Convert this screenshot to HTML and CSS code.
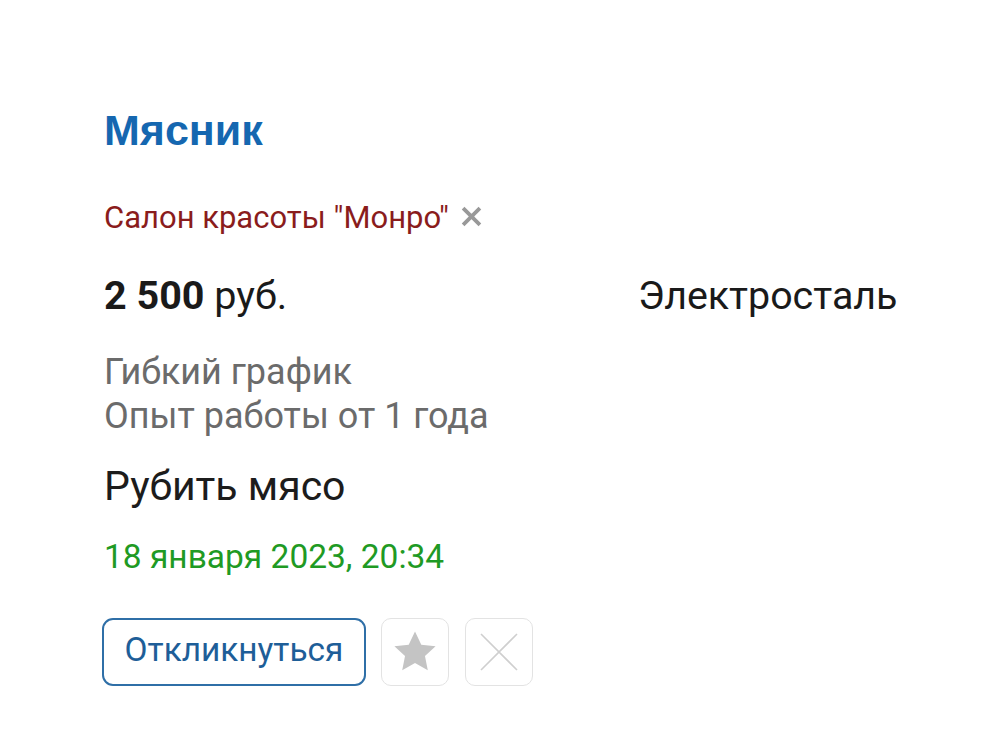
FILE: index.html
```html
<!DOCTYPE html>
<html lang="ru">
<head>
<meta charset="utf-8">
<link rel="stylesheet" href="styles.css">
</head>
<body>
<div class="card">
  <h1 class="title">Мясник</h1>
  <div class="company">
    <span class="company-name">Салон красоты "Монро"</span>
    <svg class="company-x" width="21" height="21" viewBox="0 0 20 20"><path d="M2 2 L18 18 M18 2 L2 18" stroke="#999999" stroke-width="3.6" stroke-linecap="butt"/></svg>
  </div>
  <div class="price-row">
    <div class="price"><b>2 500</b> руб.</div>
    <div class="city">Электросталь</div>
  </div>
  <div class="conditions">
    <div>Гибкий график</div>
    <div>Опыт работы от 1 года</div>
  </div>
  <div class="desc">Рубить мясо</div>
  <div class="date">18 января 2023, 20:34</div>
  <div class="actions">
    <button class="btn-reply">Откликнуться</button>
    <button class="btn-icon">
      <svg width="52" height="52" viewBox="0 0 24 24"><path d="M12 2.5 L14.9 8.6 L21.5 9.3 L16.6 13.8 L17.9 20.4 L12 17.1 L6.1 20.4 L7.4 13.8 L2.5 9.3 L9.1 8.6 Z" fill="#c4c4c4"/></svg>
    </button>
    <button class="btn-icon">
      <svg width="40" height="40" viewBox="0 0 40 40"><path d="M2 2 L38 38 M38 2 L2 38" stroke="#cfcfcf" stroke-width="1.6"/></svg>
    </button>
  </div>
</div>
</body>
</html>
```
FILE: styles.css
```css
html, body {
  margin: 0;
  padding: 0;
  background: #ffffff;
}
.card {
  padding: 106px 0 0 104px;
  font-family: Roboto, "Noto Sans", sans-serif;
}
.title {
  margin: 0;
  font-family: "Liberation Sans", Arial, sans-serif;
  font-weight: bold;
  font-size: 43px;
  line-height: 48px;
  color: #1567b0;
}
.company {
  margin-top: 46px;
  display: flex;
  align-items: center;
  height: 36px;
}
.company-name {
  font-size: 31px;
  line-height: 36px;
  color: #8a1c1c;
}
.company-x {
  margin-left: 12px;
  margin-top: -4px;
}
.price-row {
  margin-top: 38px;
  display: grid;
  grid-template-columns: 534px auto;
  align-items: baseline;
}
.price {
  font-size: 39.5px;
  line-height: 44px;
  color: #1a1a1a;
}
.price b {
  font-weight: bold;
}
.city {
  font-size: 39.4px;
  line-height: 44px;
  color: #1a1a1a;
}
.conditions {
  margin-top: 32px;
  font-size: 36px;
  line-height: 44px;
  color: #6b6b6b;
}
.desc {
  margin-top: 24px;
  font-size: 41px;
  line-height: 48px;
  color: #1c1c1c;
}
.date {
  margin-top: 27px;
  font-size: 33.5px;
  line-height: 40px;
  color: #1f9a24;
}
.actions {
  margin-top: 41px;
  display: flex;
  gap: 16px;
}
.btn-reply {
  margin-left: -2px;
  width: 264px;
  height: 68px;
  border: 2px solid #2f6fa7;
  border-radius: 11px;
  background: #ffffff;
  font-family: Roboto, "Noto Sans", sans-serif;
  font-size: 33.4px;
  color: #1e5e98;
  padding: 0 0 5px 0;
}
.btn-icon {
  margin-left: -1px;
  width: 68px;
  height: 68px;
  border: 1.5px solid #e3e3e3;
  border-radius: 10px;
  background: #ffffff;
  padding: 0;
  display: flex;
  align-items: center;
  justify-content: center;
}
.btn-icon + .btn-icon {
  margin-left: 0;
}
```
